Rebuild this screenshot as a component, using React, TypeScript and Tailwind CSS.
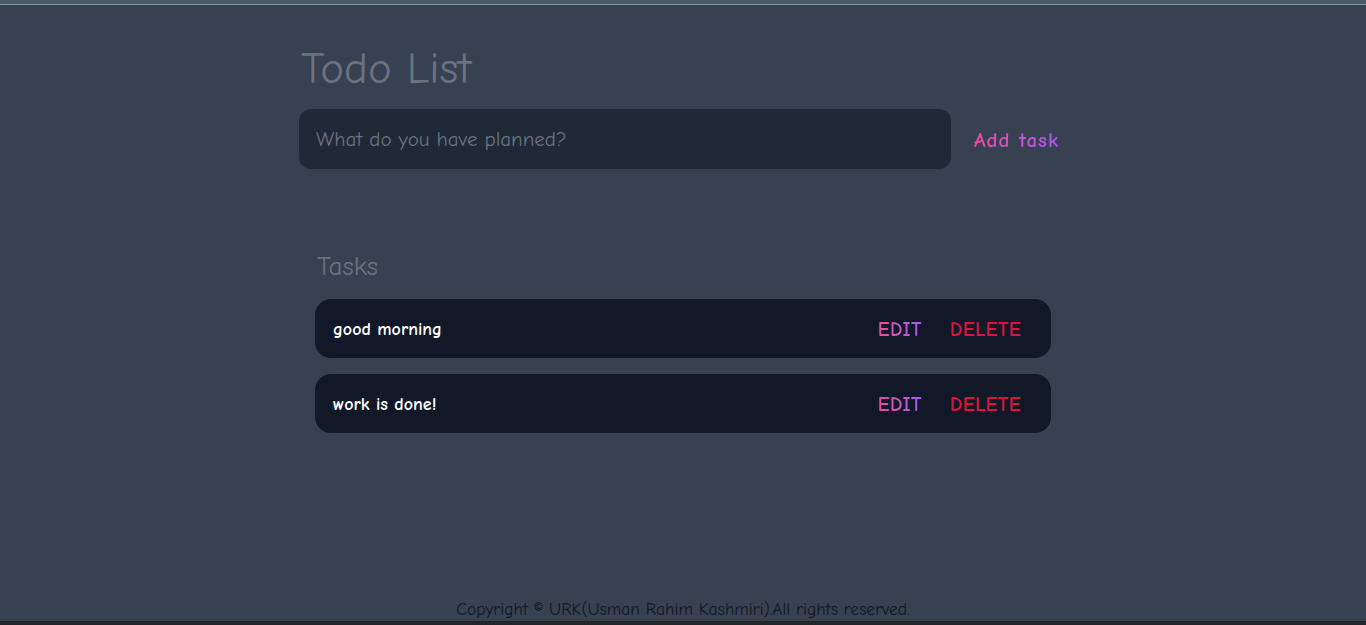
import { useState } from "react";

const FONT = "font-['Comic_Sans_MS','Comic_Neue','Noto_Sans',sans-serif]";

type Task = { id: number; text: string };

export default function App() {
  const [tasks] = useState<Task[]>([
    { id: 1, text: "good morning" },
    { id: 2, text: "work is done!" },
  ]);

  return (
    <div className={`h-[625px] flex flex-col bg-[#374151] ${FONT}`}>
      {/* window chrome strip */}
      <div className="h-[4px] bg-[#4a5a66]" />
      <div className="h-[1px] bg-[#8e9a9c]" />

      <main className="flex-1 w-full max-w-3xl mx-auto">
        <h1 className="mt-[38px] pl-[2px] text-[45px] leading-[50px] text-[#6b7280]">Todo List</h1>

        {/* new task form */}
        <form className="mt-[16px] flex items-center" onSubmit={(e) => e.preventDefault()}>
          <input
            className="flex-1 h-[60px] rounded-xl bg-[#1f2937] px-[17px] text-[21px] text-white placeholder:text-[#6b7280] outline-none"
            placeholder="What do you have planned?"
          />
          <button type="submit" className={`w-[116px] pl-[23px] pt-[3px] text-left ${FONT}`}>
            <span className="text-[21px] font-bold tracking-[1px] bg-gradient-to-r from-[#ec4899] to-[#a855f7] bg-clip-text text-transparent">
              Add task
            </span>
          </button>
        </form>

        {/* task list */}
        <section className="mt-[83px] px-4">
          <h2 className="pl-[2px] text-[27px] leading-[30px] text-[#6b7280]">Tasks</h2>
          <div className="mt-[17px] flex flex-col gap-4">
            {tasks.map((t) => (
              <div
                key={t.id}
                className="h-[59px] flex items-center justify-between rounded-2xl bg-[#111827] pl-[18px] pr-[30px]"
              >
                <span className="pt-[2px] text-[18px] font-bold text-white">{t.text}</span>
                <div className="flex items-center gap-[28px] pt-[2px]">
                  <button className={FONT}>
                    <span className="text-[20px] font-bold tracking-[0.4px] bg-gradient-to-r from-[#ec4899] to-[#a855f7] bg-clip-text text-transparent">
                      EDIT
                    </span>
                  </button>
                  <button className={FONT}>
                    <span className="text-[20px] font-bold tracking-[0.4px] text-[#dc143c]">DELETE</span>
                  </button>
                </div>
              </div>
            ))}
          </div>
        </section>
      </main>

      <footer className="pb-[1px] text-center text-[17.5px] leading-[22px] text-[#111827]">
        Copyright © URK(Usman Rahim Kashmiri).All rights reserved.
      </footer>
      <div className="h-[4px] bg-[#222629]" />
    </div>
  );
}
